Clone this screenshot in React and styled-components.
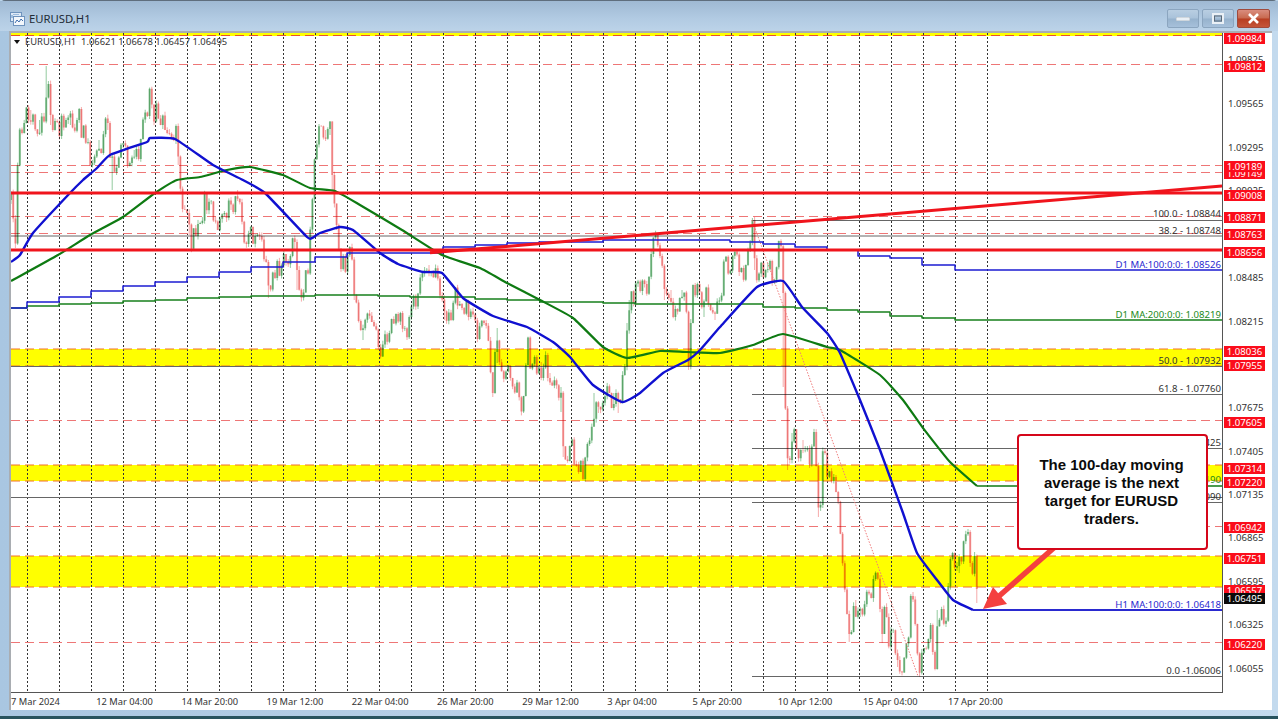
import styled, { createGlobalStyle } from "styled-components";

const GlobalStyle = createGlobalStyle`
  html, body {
    margin: 0;
    padding: 0;
    overflow: hidden;
    background: #b9d3e9;
  }
`;

const AXIS_FONT = `"Noto Sans", "Liberation Sans", sans-serif`;

const Window = styled.div`
  width: 1278px;
  height: 719px;
  box-sizing: border-box;
  display: flex;
  flex-direction: column;
  background: linear-gradient(90deg, #a9c6e1 0, #b8d0e7 40%, #c3daee 100%);
  border-top: 1px solid #5f6e7d;
  border-bottom: 3px solid #28535e;
  border-radius: 5px 5px 0 0;
`;

const TitleBar = styled.div`
  height: 30px;
  box-sizing: border-box;
  display: flex;
  align-items: flex-start;
  padding: 8px 8px 0 10px;
  gap: 4px;
  background: linear-gradient(180deg, #9fb9d3 0, #b2cbe3 60%, #bcd3e9 100%);
`;

const TitleIcon = styled.svg`
  margin-top: 3px;
  flex: none;
`;

const Title = styled.span`
  flex: 1;
  font: 11.3px/20px "Noto Sans", sans-serif;
  color: #222c36;
`;

const ControlGroup = styled.div`
  display: flex;
  gap: 3px;
`;

const Control = styled.div`
  width: ${(p) => (p.$wide ? 33 : 32)}px;
  height: 19px;
  display: flex;
  align-items: center;
  justify-content: center;
  border: 1px solid ${(p) => (p.$danger ? "#a04a3c" : "#8ba5bf")};
  border-radius: 2px;
  box-sizing: border-box;
  background: ${(p) =>
    p.$danger
      ? "linear-gradient(180deg, #d98d7e 0, #c8694f 48%, #b83e22 52%, #c4553a 100%)"
      : "linear-gradient(180deg, #b9cee2 0, #a9c2da 48%, #96b2cd 52%, #a6c0da 100%)"};
`;

const Body = styled.div`
  flex: 1;
  display: flex;
  min-height: 0;
  padding: 0 6px 6px 9px;
`;

const Frame = styled.div`
  flex: 1;
  display: flex;
  background: #fff;
  border-left: 2px solid #a9adb2;
  border-top: 2px solid #a9adb2;
`;

const ChartColumn = styled.div`
  width: 1212px;
  display: flex;
  flex-direction: column;
`;

const Plot = styled.div`
  position: relative;
  width: 1212px;
  height: 660px;
  box-sizing: border-box;
  border-right: 1px solid #555;
  border-bottom: 1px solid #555;
  overflow: hidden;
`;

const Drawing = styled.svg`
  display: block;
  width: 1211px;
  height: 659px;
  filter: blur(0.35px);
`;

const TimeAxis = styled.div`
  flex: 1;
  display: flex;
`;

const TimeLabel = styled.span`
  width: 85.2px;
  flex: none;
  padding-top: 2px;
  font: 9.3px/14px ${AXIS_FONT};
  color: #333;
  white-space: nowrap;
`;

const PriceAxis = styled.div`
  position: relative;
  flex: 1;
`;

const PriceTick = styled.span`
  position: absolute;
  left: 5px;
  top: ${(p) => p.$y - 39}px;
  height: 12px;
  font: 9.6px/12px ${AXIS_FONT};
  color: #333;
`;

const PriceTag = styled.span`
  position: absolute;
  left: 1px;
  top: ${(p) => p.$y - 38}px;
  width: 41px;
  height: 11px;
  text-align: center;
  font: 9.6px/11px ${AXIS_FONT};
  color: #fff;
  background: ${(p) => p.$bg || "#fb0d1b"};
`;

const ChartLegend = styled.div`
  position: absolute;
  left: 3px;
  top: 3px;
  display: flex;
  align-items: center;
  gap: 5px;
  font: 9.4px/12px ${AXIS_FONT};
  color: #333;
  white-space: pre;
`;

const LegendMark = styled.i`
  width: 0;
  height: 0;
  border-left: 3px solid transparent;
  border-right: 3px solid transparent;
  border-top: 4px solid #111;
`;

const LineLabel = styled.span`
  position: absolute;
  right: 1px;
  top: ${(p) => p.$y - 39}px;
  height: 12px;
  font: 9.6px/12px ${AXIS_FONT};
  color: ${(p) => p.$color || "#333"};
  white-space: nowrap;
`;

const Callout = styled.div`
  position: absolute;
  left: 1006px;
  top: 401px;
  width: 191px;
  height: 116px;
  box-sizing: border-box;
  display: flex;
  align-items: center;
  justify-content: center;
  padding: 0 14px 0 12px;
  border: 2px solid #d5061a;
  border-radius: 4px;
  background: #fff;
  text-align: center;
  font: bold 15px/18px "Liberation Sans", Arial, sans-serif;
  color: #0b0b0b;
`;

const GridLine = styled.line`
  stroke: #333;
  stroke-width: 1;
  stroke-dasharray: 2 2;
`;

const Band = styled.rect`
  fill: #ffff00;
`;

const DashLine = styled.line`
  stroke: ${(p) => p.$color || "#ee7676"};
  stroke-width: 1;
  stroke-dasharray: 9 5;
`;

const HardLine = styled.line`
  stroke: #f0141c;
  stroke-width: 3;
`;

const FibLine = styled.line`
  stroke: #666;
  stroke-width: 1;
`;

const Candles = styled.path`
  fill: none;
  stroke: ${(p) => p.$color};
  stroke-width: ${(p) => p.$width};
  mix-blend-mode: multiply;
`;

const Average = styled.path`
  fill: none;
  stroke: ${(p) => p.$color};
  stroke-width: ${(p) => p.$width};
  stroke-linejoin: round;
`;

const priceTicks = [
  ["1.09825", 60],
  ["1.09565", 104],
  ["1.09295", 148],
  ["1.09025", 191],
  ["1.08755", 235],
  ["1.08485", 278],
  ["1.08215", 322],
  ["1.07945", 365],
  ["1.07675", 408],
  ["1.07405", 452],
  ["1.07135", 495],
  ["1.06865", 538],
  ["1.06595", 582],
  ["1.06325", 625],
  ["1.06055", 669],
];

const priceTags = [
  ["1.09984", 38],
  ["1.09812", 66],
  ["1.09149", 173],
  ["1.09189", 166],
  ["1.09008", 195],
  ["1.08871", 217],
  ["1.08763", 234],
  ["1.08656", 252],
  ["1.08036", 351],
  ["1.07955", 365],
  ["1.07605", 422],
  ["1.07314", 468],
  ["1.07220", 482],
  ["1.06942", 527],
  ["1.06751", 558],
  ["1.06557", 590],
  ["1.06495", 598, "#0a0a0a"],
  ["1.06220", 644],
];

const timeLabels = [
  "7 Mar 2024",
  "12 Mar 04:00",
  "14 Mar 20:00",
  "19 Mar 12:00",
  "22 Mar 04:00",
  "26 Mar 20:00",
  "29 Mar 12:00",
  "3 Apr 04:00",
  "5 Apr 20:00",
  "10 Apr 12:00",
  "15 Apr 04:00",
  "17 Apr 20:00",
];

const lineLabels = [
  ["100.0 - 1.08844", 214],
  ["38.2 - 1.08748", 231],
  ["D1 MA:100:0:0: 1.08526", 265, "#2a2ad0"],
  ["D1 MA:200:0:0: 1.08219", 315, "#1d8a1d"],
  ["50.0 - 1.07932", 361],
  ["61.8 - 1.07760", 389],
  ["78.6 - 1.07425", 443],
  ["H1 MA:200:0:0: 1.07190", 480, "#1d8a1d"],
  ["1.07090", 497],
  ["H1 MA:100:0:0: 1.06418", 605, "#2a2ad0"],
  ["0.0 -1.06006", 671],
];

const pinkLines = [64, 165, 172, 216, 233, 420, 526, 642];
const zones = [
  [349, 366],
  [465, 481],
  [556, 587],
];

// x, y of the price path, read off the chart
const pricePath = [
  [11, 200], [14, 215], [16, 248], [17, 180], [20, 132], [27, 115], [30, 110], [33, 122], [40, 120],
  [46, 110], [47, 66], [50, 95], [51, 125], [60, 130], [70, 125], [78, 120], [85, 135], [90, 155],
  [95, 155], [100, 140], [108, 130], [112, 160], [113, 190], [120, 155], [135, 150], [140, 148],
  [143, 125], [150, 95], [152, 105], [160, 118], [170, 130], [175, 125], [178, 165], [183, 210],
  [190, 235], [197, 235], [205, 200], [215, 220], [230, 210], [238, 190], [245, 235], [260, 240],
  [265, 255], [268, 298], [275, 270], [285, 255], [295, 250], [298, 290], [302, 295], [308, 270],
  [313, 200], [316, 140], [325, 130], [330, 135], [333, 190], [337, 230], [340, 260], [347, 262],
  [352, 255], [355, 300], [362, 340], [370, 310], [378, 350], [385, 345], [395, 320], [400, 325],
  [407, 340], [415, 295], [425, 270], [430, 265], [437, 280], [445, 320], [455, 300], [465, 310],
  [475, 320], [480, 335], [487, 320], [492, 397], [497, 328], [498, 363], [503, 370], [505, 380],
  [510, 370], [517, 393], [522, 408], [528, 350], [537, 375], [542, 362], [550, 373], [560, 387],
  [562, 412], [563, 457], [570, 447], [577, 463], [583, 477], [587, 450], [592, 430], [595, 393],
  [598, 413], [605, 400], [613, 393], [618, 413], [623, 380], [626, 363], [627, 323], [630, 300],
  [640, 288], [648, 287], [653, 253], [657, 235], [662, 260], [665, 300], [670, 290], [675, 317],
  [682, 290], [687, 307], [688, 343], [689, 370], [692, 290], [698, 298], [703, 317], [707, 290],
  [715, 320], [720, 300], [723, 267], [733, 255], [740, 267], [745, 275], [748, 257], [753, 218],
  [755, 270], [762, 277], [767, 263], [773, 273], [780, 252], [783, 253], [784, 387], [785, 410],
  [788, 470], [792, 433], [798, 450], [803, 440], [810, 463], [815, 433], [819, 517], [823, 463],
  [835, 480], [838, 500], [842, 557], [845, 583], [850, 642], [855, 600], [860, 617], [867, 597],
  [878, 577], [882, 627], [883, 643], [885, 607], [888, 643], [893, 633], [898, 667], [903, 673],
  [907, 643], [912, 593], [917, 640], [919, 675], [923, 650], [930, 623], [935, 667], [938, 610],
  [945, 627], [950, 570], [952, 552], [960, 573], [963, 550], [967, 535], [973, 563], [975, 552],
  [977, 603],
];

const h1Ma100 = [
  [11, 262], [20, 255], [33, 233], [70, 193], [83, 180], [97, 168], [110, 155], [147, 142], [150, 138],
  [175, 139], [213, 165], [243, 180], [265, 193], [307, 237], [312, 238], [320, 233], [340, 227],
  [353, 230], [380, 253], [398, 264], [423, 272], [442, 273], [463, 298], [493, 316], [527, 327],
  [553, 342], [570, 357], [593, 385], [622, 402], [640, 393], [663, 373], [688, 360], [700, 350],
  [720, 327], [757, 287], [783, 281], [802, 307], [827, 333], [840, 353], [860, 400], [880, 450],
  [903, 513], [917, 553], [937, 580], [953, 600], [973, 610],
];

const h1Ma200 = [
  [11, 281], [58, 255], [90, 235], [123, 217], [155, 193], [177, 180], [200, 177], [227, 170], [250, 167],
  [283, 175], [310, 188], [335, 191], [360, 205], [402, 230], [442, 255], [480, 268], [507, 283],
  [540, 300], [573, 318], [603, 347], [627, 358], [660, 351], [687, 352], [720, 353], [753, 345],
  [783, 334], [827, 347], [840, 350], [880, 375], [903, 400], [923, 428], [950, 462], [977, 486],
];

// soft curve through the points, the averages are curves and not zigzags
const toCurve = (pts) => {
  let d = `M${pts[0][0]} ${pts[0][1]}`;
  for (let i = 0; i < pts.length - 1; i++) {
    const p0 = pts[i - 1] || pts[i];
    const p1 = pts[i];
    const p2 = pts[i + 1];
    const p3 = pts[i + 2] || p2;
    const c1x = p1[0] + (p2[0] - p0[0]) / 14;
    const c1y = p1[1] + (p2[1] - p0[1]) / 14;
    const c2x = p2[0] - (p3[0] - p1[0]) / 14;
    const c2y = p2[1] - (p3[1] - p1[1]) / 14;
    d += `C${c1x.toFixed(1)} ${c1y.toFixed(1)} ${c2x.toFixed(1)} ${c2y.toFixed(1)} ${p2[0]} ${p2[1]}`;
  }
  return d;
};

const toStairs = (steps) =>
  steps.map(([x, y], i) => `${i ? "L" : "M"}${x} ${y}H${steps[i + 1] ? steps[i + 1][0] : 1222}`).join("");

const d1Ma100 = toStairs([
  [11, 308], [27, 302], [59, 297], [91, 291], [123, 286], [155, 282], [187, 277], [219, 272], [251, 267],
  [283, 262], [315, 257], [347, 253], [443, 247], [475, 245], [507, 243], [539, 242], [603, 240],
  [730, 242], [763, 244], [795, 247], [827, 250], [858, 256], [890, 258], [922, 265], [955, 270],
]);

const d1Ma200 = toStairs([
  [11, 308], [27, 306], [59, 304], [91, 303], [123, 301], [155, 300], [187, 298], [219, 297], [251, 296],
  [315, 295], [378, 296], [410, 297], [475, 299], [507, 300], [540, 302], [603, 303], [635, 304],
  [763, 307], [795, 308], [827, 310], [858, 312], [890, 316], [922, 318], [955, 320],
]);

function buildCandles() {
  let seed = 41;
  const rand = () => {
    seed = (seed * 16807) % 2147483647;
    return seed / 2147483647;
  };
  const yAt = (x) => {
    const i = pricePath.findIndex((p) => p[0] >= x);
    if (i <= 0) return pricePath[0][1];
    const [x0, y0] = pricePath[i - 1];
    const [x1, y1] = pricePath[i];
    return y0 + ((y1 - y0) * (x - x0)) / (x1 - x0);
  };
  let up = "";
  let down = "";
  let wicksUp = "";
  let wicksDown = "";
  let open = yAt(11);
  for (let x = 11; x <= 977; x += 2.2) {
    const close = yAt(x) + (rand() - 0.5) * 22 + Math.sin(x * 0.7) * 4;
    // the wick has to reach the read-off highs and lows that fall inside this bar
    const nearby = pricePath.filter((p) => Math.abs(p[0] - x) <= 1.1).map((p) => p[1]);
    const top = Math.min(Math.min(open, close) - rand() * 4, ...nearby);
    const bottom = Math.max(Math.max(open, close) + rand() * 4, ...nearby);
    const body = `M${x.toFixed(1)} ${open.toFixed(1)}V${close.toFixed(1)}`;
    const wick = `M${x.toFixed(1)} ${top.toFixed(1)}V${bottom.toFixed(1)}`;
    if (close < open) {
      up += body;
      wicksUp += wick;
    } else {
      down += body;
      wicksDown += wick;
    }
    open = close;
  }
  return { up, down, wicksUp, wicksDown };
}

const candles = buildCandles();

function ChartDrawing() {
  const gridXs = Array.from({ length: 31 }, (_, i) => 27.5 + i * 32);
  return (
    <Drawing viewBox="11 33 1211 659">
      <Band x="11" y="33" width="1211" height="3" />
      {zones.map(([top, bottom]) => (
        <Band key={top} x="11" y={top} width="1211" height={bottom - top} />
      ))}
      {gridXs.map((x) => (
        <GridLine key={x} x1={x} x2={x} y1="33" y2="692" />
      ))}
      <DashLine x1="11" x2="1222" y1="35.5" y2="35.5" $color="#e8502a" />
      {pinkLines.map((y) => (
        <DashLine key={y} x1="11" x2="1222" y1={y + 0.5} y2={y + 0.5} />
      ))}
      {zones.flat().map((y) => (
        <DashLine key={y} x1="11" x2="1222" y1={y} y2={y} $color="#f0702a" />
      ))}
      <FibLine x1="11" x2="1222" y1="236" y2="236" />
      <FibLine x1="11" x2="1222" y1="366.5" y2="366.5" />
      <FibLine x1="11" x2="1222" y1="497.5" y2="497.5" />
      {[220, 394, 448, 502, 676].map((y) => (
        <FibLine key={y} x1="752" x2="1222" y1={y + 0.5} y2={y + 0.5} />
      ))}
      <Candles d={candles.wicksUp} $color="#93ca9f" $width="1" />
      <Candles d={candles.wicksDown} $color="#f6aaaa" $width="1" />
      <Candles d={candles.up} $color="#93ca9f" $width="2.1" />
      <Candles d={candles.down} $color="#f6aaaa" $width="2.1" />
      <line x1="752" y1="220" x2="918" y2="676" stroke="#ef7a7a" strokeWidth="1" strokeDasharray="1.5 1.5" />
      <Average d={d1Ma200} $color="#17801c" $width="1.5" />
      <Average d={d1Ma100} $color="#1c1cd2" $width="1.5" />
      <Average d={toCurve(h1Ma200)} $color="#0e7a12" $width="2.2" />
      <Average d="M977 486H1222" $color="#0e7a12" $width="1.4" />
      <Average d={toCurve(h1Ma100)} $color="#1010d0" $width="2.4" />
      <Average d="M973 610H1222" $color="#2a2ad0" $width="1.9" />
      <HardLine x1="11" x2="1222" y1="193" y2="193" />
      <HardLine x1="11" x2="1222" y1="250" y2="250" />
      <HardLine x1="430" y1="252.8" x2="1222" y2="186" />
      <line x1="1056" y1="546" x2="998" y2="597" stroke="#f4403f" strokeWidth="5.5" />
      <polygon points="983,609 993,587 1007,604" fill="#f4403f" />
    </Drawing>
  );
}

function App() {
  return (
    <>
      <GlobalStyle />
      <Window>
        <TitleBar>
          <TitleIcon width="15" height="14" viewBox="0 0 15 14">
            <rect x="0.5" y="0.5" width="11" height="9" fill="#dfeaf6" stroke="#6f93bd" />
            <rect x="3.5" y="4.5" width="11" height="9" fill="#f3f7fc" stroke="#6f93bd" />
            <path d="M5 11 L7 8 L9 10 L11 7 L13 9" fill="none" stroke="#3f6fae" />
            <path d="M2 6 V3 M4 3 V2 M6 3 V2 M8 3 V2" stroke="#5d8ec6" />
          </TitleIcon>
          <Title>EURUSD,H1</Title>
          <ControlGroup>
            <Control>
              <svg width="14" height="4" viewBox="0 0 14 4">
                <rect width="14" height="4" rx="0.5" fill="#e9eff5" stroke="#7d8a97" strokeWidth="0.5" />
              </svg>
            </Control>
            <Control>
              <svg width="12" height="11" viewBox="0 0 12 11">
                <rect x="1" y="1" width="10" height="9" fill="none" stroke="#eaf0f6" strokeWidth="2" />
                <rect x="2.5" y="3" width="7" height="5" fill="none" stroke="#5d6b78" />
              </svg>
            </Control>
            <Control $wide $danger>
              <svg width="13" height="11" viewBox="0 0 13 11">
                <path d="M2 1 L11 10 M11 1 L2 10" stroke="#fff" strokeWidth="2.6" />
              </svg>
            </Control>
          </ControlGroup>
        </TitleBar>
        <Body>
          <Frame>
            <ChartColumn>
              <Plot>
                <ChartDrawing />
                <ChartLegend>
                  <LegendMark />
                  <span>EURUSD,H1  1.06621 1.06678 1.06457 1.06495</span>
                </ChartLegend>
                {lineLabels.map(([text, y, color]) => (
                  <LineLabel key={text} $y={y} $color={color}>
                    {text}
                  </LineLabel>
                ))}
                <Callout>The 100-day moving average is the next target for EURUSD traders.</Callout>
              </Plot>
              <TimeAxis>
                {timeLabels.map((label) => (
                  <TimeLabel key={label}>{label}</TimeLabel>
                ))}
              </TimeAxis>
            </ChartColumn>
            <PriceAxis>
              {priceTicks.map(([text, y]) => (
                <PriceTick key={text} $y={y}>
                  {text}
                </PriceTick>
              ))}
              {priceTags.map(([text, y, bg]) => (
                <PriceTag key={text} $y={y} $bg={bg}>
                  {text}
                </PriceTag>
              ))}
            </PriceAxis>
          </Frame>
        </Body>
      </Window>
    </>
  );
}

export default App;
